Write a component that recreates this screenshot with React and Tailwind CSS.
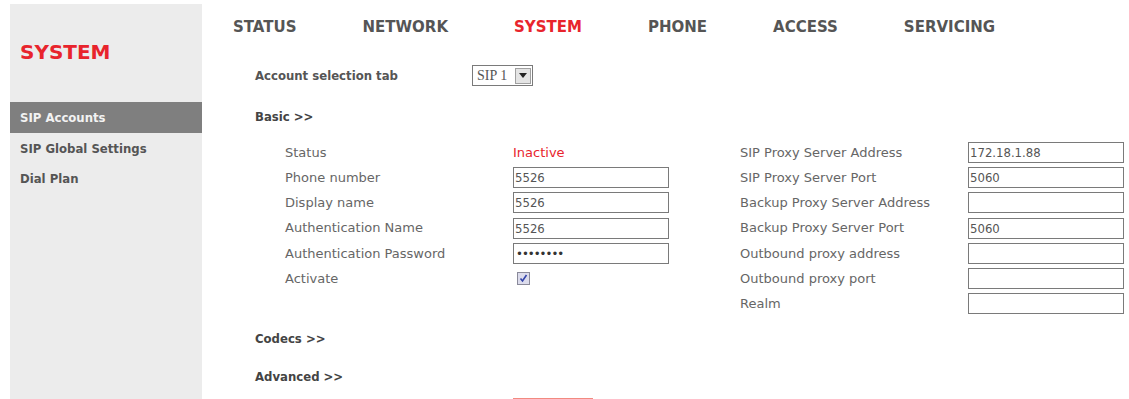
import { useState } from 'react';

const NAV = ['STATUS', 'NETWORK', 'SYSTEM', 'PHONE', 'ACCESS', 'SERVICING'];

const LEFT = [
  { label: 'Status', kind: 'text', value: 'Inactive' },
  { label: 'Phone number', kind: 'input', value: '5526' },
  { label: 'Display name', kind: 'input', value: '5526' },
  { label: 'Authentication Name', kind: 'input', value: '5526' },
  { label: 'Authentication Password', kind: 'password', value: '••••••••' },
  { label: 'Activate', kind: 'check' },
];

const RIGHT = [
  { label: 'SIP Proxy Server Address', value: '172.18.1.88' },
  { label: 'SIP Proxy Server Port', value: '5060' },
  { label: 'Backup Proxy Server Address', value: '' },
  { label: 'Backup Proxy Server Port', value: '5060' },
  { label: 'Outbound proxy address', value: '' },
  { label: 'Outbound proxy port', value: '' },
  { label: 'Realm', value: '' },
];

const label = "font-['DejaVu_Sans',sans-serif] text-[13px] text-[#666]";
const heading = "font-['DejaVu_Sans_Condensed','DejaVu_Sans',sans-serif] text-[13px] font-bold text-[#444] leading-[18px]";

function Box({ children }) {
  return (
    <div className="w-[156px] h-[21px] border border-[#7a7a7a] bg-white flex items-center px-[1px] text-[13px] text-[#555] font-['DejaVu_Sans_Condensed','DejaVu_Sans',sans-serif] leading-none">
      {children}
    </div>
  );
}

function Row({ children }) {
  return <div className="h-[25.2px] flex items-center">{children}</div>;
}

export default function App() {
  const [active] = useState('SIP Accounts');
  return (
    <div className="w-[1129px] h-[399px] overflow-hidden bg-white flex font-['DejaVu_Sans',sans-serif]">
      {/* sidebar */}
      <div className="ml-[10px] mt-[4px] w-[192px] bg-[#ececec] flex flex-col">
        <div className="h-[98px] pl-[10px] pt-[38px] text-[20px] font-bold text-[#e8242c] leading-none">SYSTEM</div>
        {['SIP Accounts', 'SIP Global Settings', 'Dial Plan'].map((item) => (
          <div
            key={item}
            className={`h-[30.5px] pl-[10px] pt-[1px] flex items-center text-[13px] font-bold font-['DejaVu_Sans_Condensed','DejaVu_Sans',sans-serif] ${item === active ? 'bg-[#7f7f7f] text-[#f2f2f2]' : 'text-[#555]'}`}
          >
            {item}
          </div>
        ))}
      </div>

      {/* main */}
      <div className="flex-1 pl-[31px] pt-[18px] flex flex-col">
        <div className="flex gap-[66px] text-[15px] font-bold leading-[18px]">
          {NAV.map((n) => (
            <span key={n} className={n === 'SYSTEM' ? 'text-[#e8242c]' : 'text-[#555]'}>{n}</span>
          ))}
        </div>

        <div className="pl-[22px] mt-[29px] flex items-center">
          <span className={`w-[217px] ${heading} text-[#555]`}>Account selection tab</span>
          <div className="w-[61px] h-[21px] border border-[#7a7a7a] bg-white flex items-center justify-between pl-[4px] pr-[1px]">
            <span className="font-['Liberation_Serif',serif] text-[14px] text-[#555] leading-none">SIP 1</span>
            <div className="w-[16px] h-[16px] bg-[#e4e4e4] border border-[#a0a0a0] flex items-center justify-center">
              <svg width="8" height="5" viewBox="0 0 8 5"><path d="M0 0h8L4 5z" fill="#222" /></svg>
            </div>
          </div>
        </div>

        <div className={`pl-[22px] mt-[22px] ${heading}`}>Basic &gt;&gt;</div>

        <div className="pl-[52px] mt-[14px] flex">
          <div className="flex flex-col">
            {LEFT.map((r) => (
              <Row key={r.label}>
                <span className={`w-[228px] ${label}`}>{r.label}</span>
                {r.kind === 'text' && <span className="text-[13px] text-[#e8242c]">{r.value}</span>}
                {r.kind === 'input' && <Box>{r.value}</Box>}
                {r.kind === 'password' && <Box><span className="pl-[1px] text-[13px] tracking-[-1px] text-[#333]">{r.value}</span></Box>}
                {r.kind === 'check' && (
                  <div className="ml-[4px] w-[13px] h-[13px] border border-[#8a8a9a] bg-[#dcdcec] flex items-center justify-center">
                    <svg width="9" height="9" viewBox="0 0 9 9"><path d="M1.5 4.5l2 2.5 4-6" stroke="#3344aa" strokeWidth="1.6" fill="none" /></svg>
                  </div>
                )}
              </Row>
            ))}
          </div>
          <div className="ml-[71px] flex flex-col">
            {RIGHT.map((r) => (
              <Row key={r.label}>
                <span className={`w-[228px] ${label}`}>{r.label}</span>
                <Box>{r.value}</Box>
              </Row>
            ))}
          </div>
        </div>

        <div className={`pl-[22px] mt-[14px] ${heading}`}>Codecs &gt;&gt;</div>
        <div className={`pl-[22px] mt-[20px] ${heading}`}>Advanced &gt;&gt;</div>
        <div className="ml-[280px] mt-[12px] w-[80px] h-[2px] shrink-0 bg-[#f28a80]" />
      </div>
    </div>
  );
}
